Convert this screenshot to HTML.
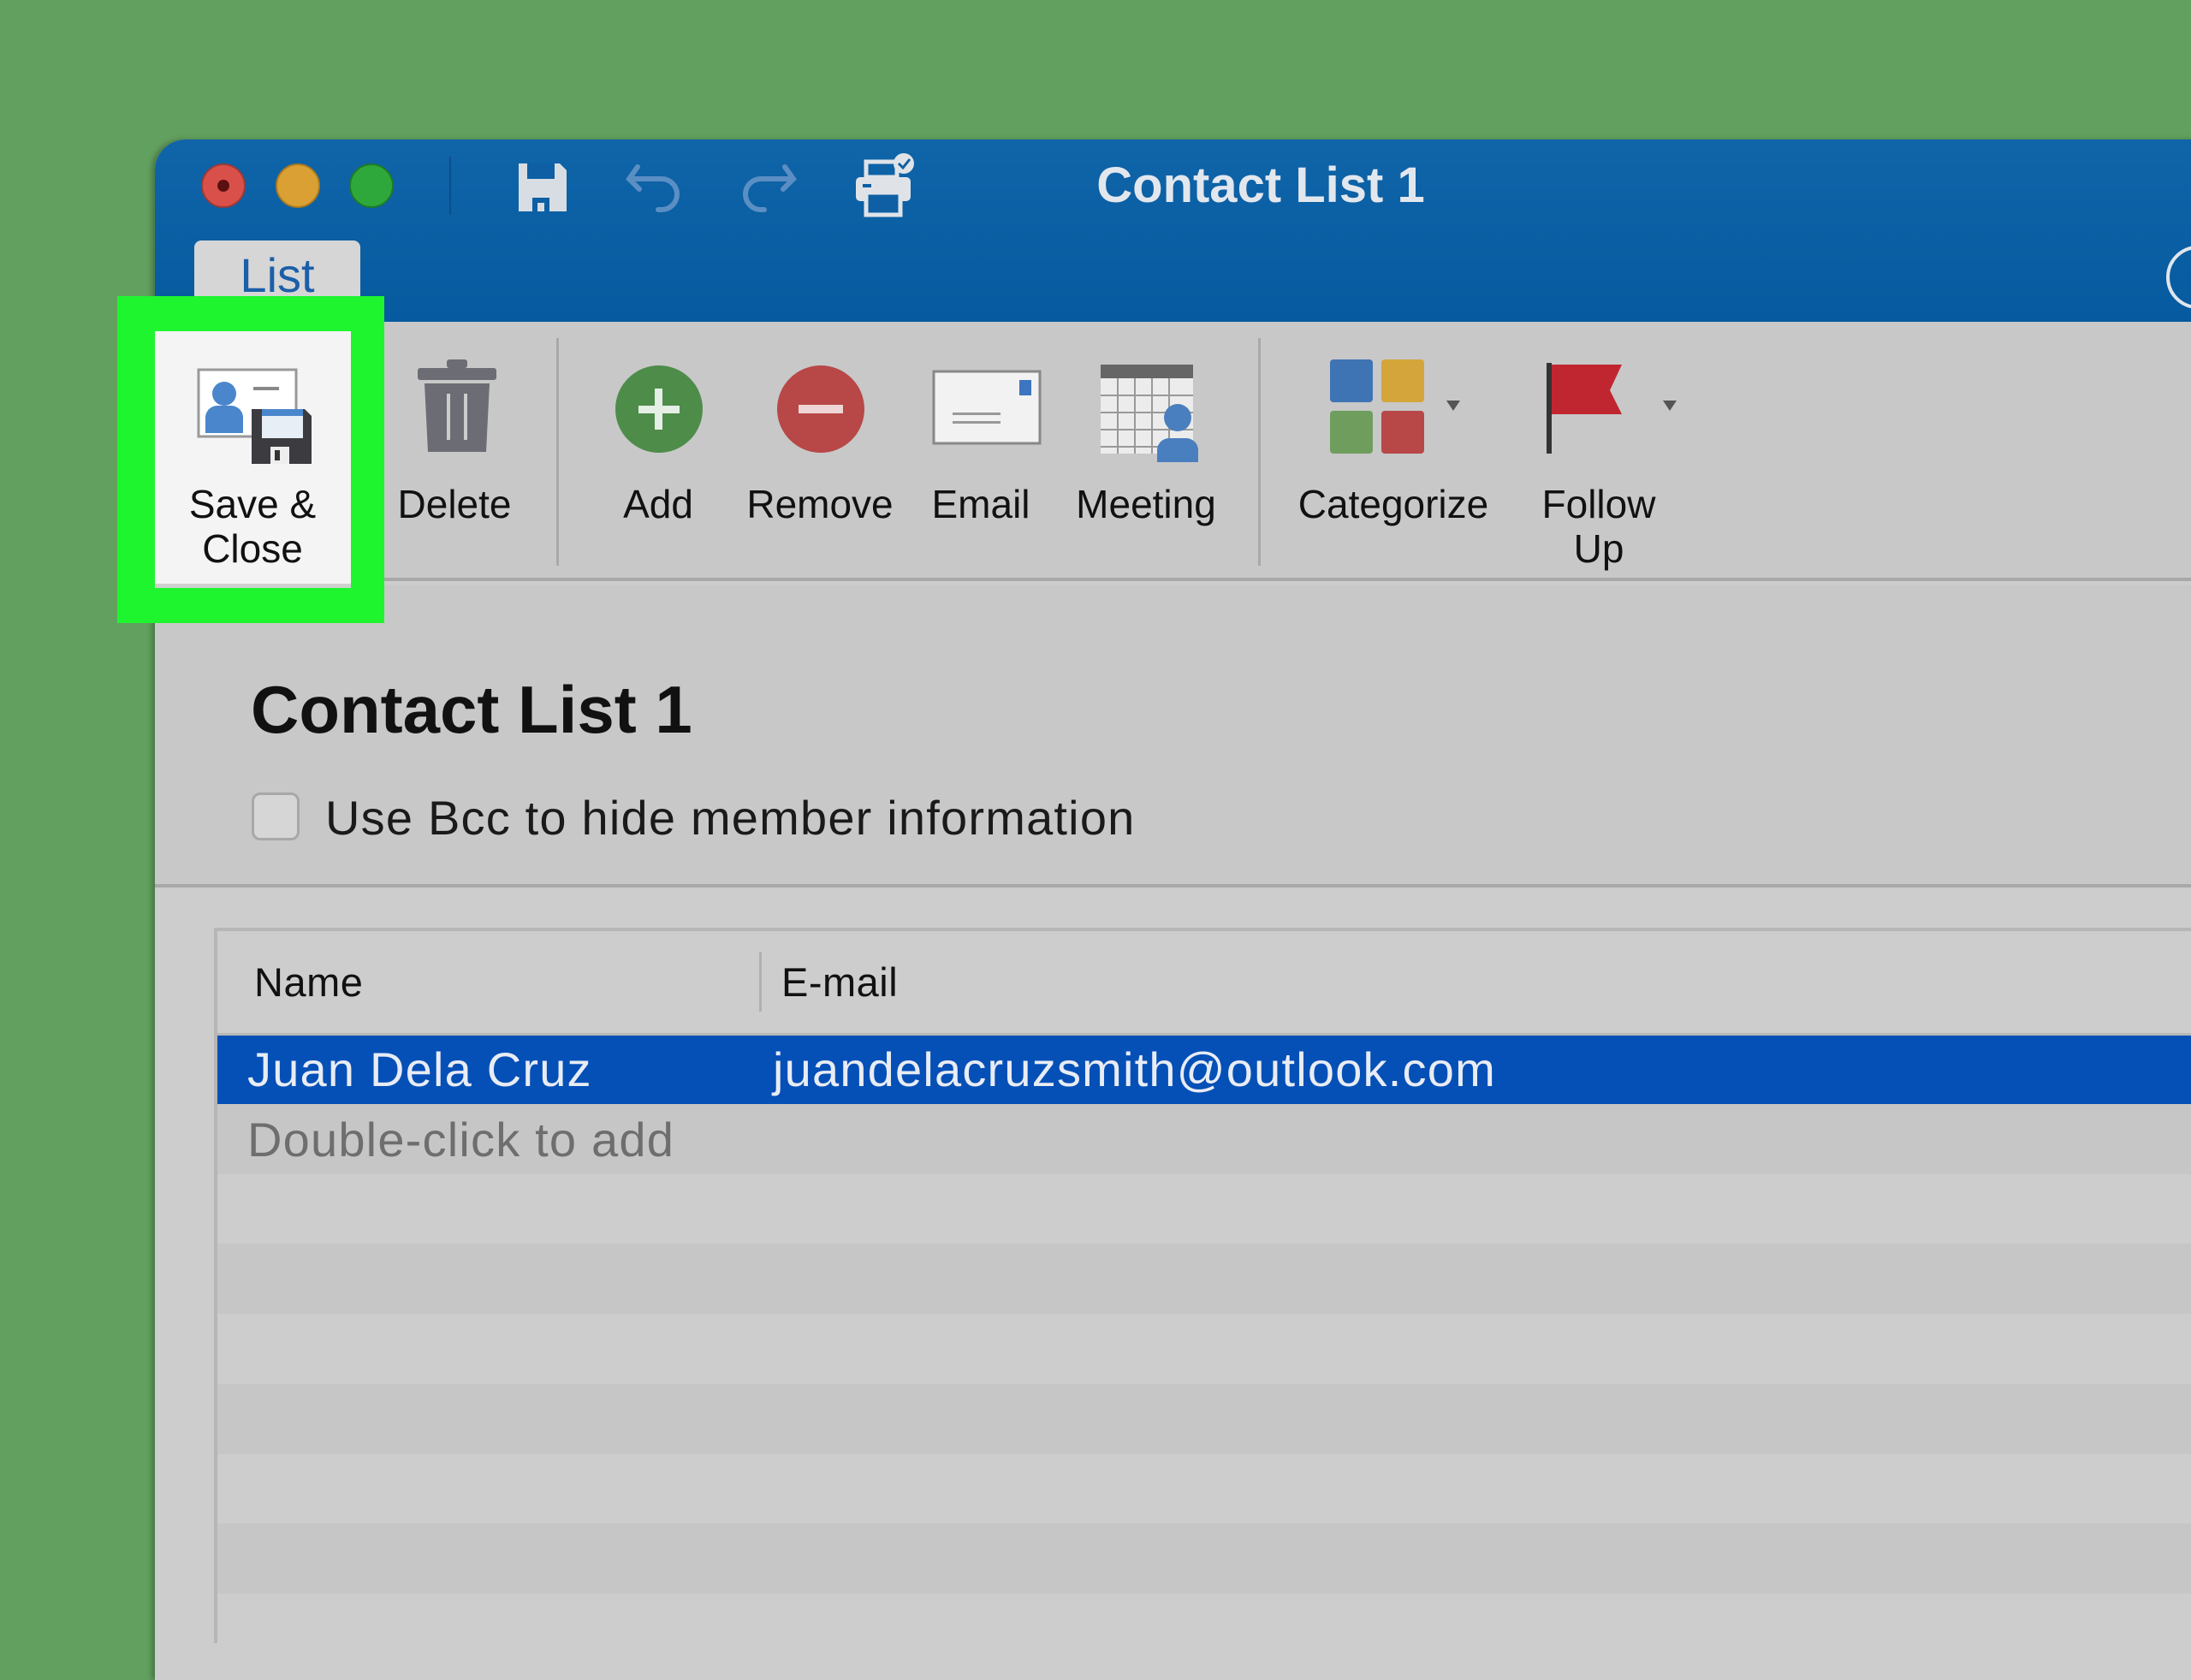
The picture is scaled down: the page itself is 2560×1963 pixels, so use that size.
<!DOCTYPE html>
<html><head><meta charset="utf-8"><style>
*{margin:0;padding:0;box-sizing:border-box}
body{width:2560px;height:1920px;overflow:hidden;background:#62a05f;font-family:"Liberation Sans",sans-serif;position:relative}
.a{position:absolute}
.lbl{position:absolute;font-size:46px;color:#111;text-align:center;line-height:52px;transform:translateX(-50%);white-space:nowrap}
.sep{position:absolute;width:3px;background:#a9a9a9;top:395px;height:266px}
</style></head><body>
<div class="a" style="left:181px;top:163px;width:2400px;height:1800px;border-radius:36px 0 0 0;overflow:hidden;background:#cdcdcd;box-shadow:-4px 0 6px rgba(0,0,0,.25)">
 <div class="a" style="left:0;top:0;width:2400px;height:213px;background:linear-gradient(#1064a8,#065a9f)"></div>
 <div class="a" style="left:54px;top:28px;width:52px;height:52px;border-radius:50%;background:#d9504b;border:2px solid #9c3a36"><div class="a" style="left:17px;top:17px;width:14px;height:14px;border-radius:50%;background:#5a1010"></div></div>
 <div class="a" style="left:141px;top:28px;width:52px;height:52px;border-radius:50%;background:#dba033;border:2px solid #a87a20"></div>
 <div class="a" style="left:227px;top:28px;width:52px;height:52px;border-radius:50%;background:#2ea83a;border:2px solid #1f7a29"></div>
 <div class="a" style="left:344px;top:20px;width:2px;height:68px;background:#0b4f8c"></div>
 <svg class="a" style="left:421px;top:24px" width="64" height="64" viewBox="0 0 64 64"><path d="M4 4h48l8 8v48H4z" fill="#d8dde3"/><rect x="14" y="4" width="32" height="18" fill="#0e5fa3"/><path d="M20 60V44h20v16h-6V50h-8v10z" fill="#0e5fa3"/></svg>
 <svg class="a" style="left:550px;top:24px" width="70" height="64" viewBox="0 0 70 64"><path d="M14 8L4 22l12 12" fill="none" stroke="#5b8fc4" stroke-width="6" stroke-linecap="round"/><path d="M6 22h36a18 18 0 0 1 0 36h-4" fill="none" stroke="#5b8fc4" stroke-width="6" stroke-linecap="round"/></svg>
 <svg class="a" style="left:680px;top:24px" width="70" height="64" viewBox="0 0 70 64"><path d="M56 8l10 14-12 12" fill="none" stroke="#5b8fc4" stroke-width="6" stroke-linecap="round"/><path d="M64 22H28a18 18 0 0 0 0 36h4" fill="none" stroke="#5b8fc4" stroke-width="6" stroke-linecap="round"/></svg>
 <svg class="a" style="left:815px;top:14px" width="76" height="80" viewBox="0 0 76 80"><rect x="16" y="12" width="36" height="18" fill="none" stroke="#dfe3e8" stroke-width="5"/><rect x="4" y="30" width="64" height="28" rx="5" fill="#dfe3e8"/><rect x="16" y="48" width="40" height="26" fill="#0e5fa3" stroke="#dfe3e8" stroke-width="5"/><rect x="12" y="38" width="10" height="4" fill="#0e5fa3"/><circle cx="60" cy="14" r="12" fill="#dfe3e8"/><path d="M54 14l5 5 8-10" fill="none" stroke="#0e5fa3" stroke-width="3"/></svg>
 <div class="a" style="left:1007px;top:22px;width:570px;text-align:center;font-size:58px;font-weight:bold;color:#e2e7ee;line-height:64px;white-space:nowrap">Contact List 1</div>
 <div class="a" style="left:46px;top:118px;width:194px;height:95px;background:#d6d6d6;border-radius:8px 8px 0 0;text-align:center;font-size:56px;color:#1b5fa9;line-height:82px">List</div>
 <div class="a" style="left:2350px;top:124px;width:74px;height:74px;border-radius:50%;border:4px solid #dfe6ee"></div>
 <div class="a" style="left:0;top:213px;width:2400px;height:303px;background:#c8c8c8;border-bottom:4px solid #a8a8a8"></div>
</div>
<!-- content -->
<div class="a" style="left:181px;top:683px;width:2379px;height:354px;background:#c8c8c8;border-bottom:4px solid #a8a8a8"></div>
<div class="a" style="left:293px;top:784px;font-size:78px;font-weight:bold;color:#111;line-height:90px">Contact List 1</div>
<div class="a" style="left:294px;top:926px;width:56px;height:56px;border-radius:10px;border:3px solid #a8a8a8;background:#d6d6d6"></div>
<div class="a" style="left:380px;top:924px;font-size:56px;letter-spacing:1.2px;color:#1a1a1a;line-height:64px">Use Bcc to hide member information</div>
<!-- green highlight -->
<div class="a" style="left:137px;top:346px;width:312px;height:382px;background:#1ef52f"></div>
<div class="a" style="left:181px;top:387px;width:229px;height:300px;background:#f4f4f4;border-bottom:5px solid #d0d0d0"></div>
<svg class="a" style="left:228px;top:430px" width="140" height="112" viewBox="0 0 140 112"><rect x="4" y="2" width="114" height="78" fill="#fff" stroke="#999" stroke-width="3"/><circle cx="34" cy="30" r="14" fill="#4a86cc"/><path d="M12 76v-18a14 14 0 0 1 14-14h16a14 14 0 0 1 14 14v18z" fill="#4a86cc"/><rect x="68" y="22" width="30" height="4" fill="#888"/><path d="M66 48h62l8 8v56H66z" fill="#3c3c40"/><rect x="78" y="48" width="48" height="34" fill="#e8eef5"/><rect x="78" y="48" width="48" height="8" fill="#4a86cc"/><rect x="88" y="92" width="22" height="20" fill="#eee"/><rect x="93" y="96" width="6" height="12" fill="#333"/></svg>
<div class="lbl" style="left:295px;top:563px">Save &amp;<br>Close</div>
<svg class="a" style="left:486px;top:418px" width="96" height="114" viewBox="0 0 96 114"><rect x="36" y="2" width="24" height="10" rx="3" fill="#6c6c74"/><rect x="2" y="12" width="92" height="14" rx="3" fill="#6c6c74"/><path d="M10 30h76l-4 80H14z" fill="#6c6c74"/><rect x="36" y="42" width="4" height="54" fill="#ccc"/><rect x="56" y="42" width="4" height="54" fill="#ccc"/></svg>
<div class="lbl" style="left:531px;top:563px">Delete</div>
<div class="sep" style="left:650px"></div>
<svg class="a" style="left:718px;top:424px" width="104" height="108" viewBox="0 0 104 108"><circle cx="52" cy="54" r="51" fill="#4e8c4a"/><rect x="28" y="50" width="48" height="9" fill="#e6efe6"/><rect x="47" y="30" width="9" height="48" fill="#e6efe6"/></svg>
<div class="lbl" style="left:769px;top:563px">Add</div>
<svg class="a" style="left:907px;top:424px" width="104" height="108" viewBox="0 0 104 108"><circle cx="52" cy="54" r="51" fill="#b84747"/><rect x="26" y="49" width="52" height="10" fill="#eed6d6"/></svg>
<div class="lbl" style="left:958px;top:563px">Remove</div>
<svg class="a" style="left:1089px;top:432px" width="128" height="90" viewBox="0 0 128 90"><rect x="2" y="2" width="124" height="84" fill="#f2f2f2" stroke="#888" stroke-width="3"/><rect x="102" y="12" width="14" height="18" fill="#3d75c0"/><rect x="24" y="50" width="56" height="3" fill="#999"/><rect x="24" y="60" width="56" height="3" fill="#999"/></svg>
<div class="lbl" style="left:1146px;top:563px">Email</div>
<svg class="a" style="left:1284px;top:424px" width="124" height="118" viewBox="0 0 124 118"><rect x="2" y="2" width="108" height="104" fill="#ececec"/><rect x="2" y="2" width="108" height="16" fill="#666"/><g stroke="#999" stroke-width="2"><path d="M2 38h108M2 58h108M2 78h108M2 98h108M22 18v88M42 18v88M62 18v88M82 18v88"/></g><circle cx="92" cy="64" r="16" fill="#4a7fbf"/><path d="M68 116v-14a14 14 0 0 1 14-14h20a14 14 0 0 1 14 14v14z" fill="#4a7fbf"/></svg>
<div class="lbl" style="left:1339px;top:563px">Meeting</div>
<div class="sep" style="left:1470px"></div>
<svg class="a" style="left:1552px;top:418px" width="160" height="116" viewBox="0 0 160 116"><rect x="2" y="2" width="50" height="50" rx="4" fill="#3f74b4"/><rect x="62" y="2" width="50" height="50" rx="4" fill="#d4a53a"/><rect x="2" y="62" width="50" height="50" rx="4" fill="#6f9d5e"/><rect x="62" y="62" width="50" height="50" rx="4" fill="#b84848"/><path d="M138 50h16l-8 12z" fill="#555"/></svg>
<div class="lbl" style="left:1628px;top:563px">Categorize</div>
<svg class="a" style="left:1805px;top:422px" width="160" height="110" viewBox="0 0 160 110"><rect x="2" y="2" width="6" height="106" fill="#333"/><path d="M8 4h82l-14 30 14 28H8z" fill="#c0262f"/><path d="M138 46h16l-8 12z" fill="#555"/></svg>
<div class="lbl" style="left:1868px;top:563px">Follow<br>Up</div>
<!-- table -->
<div class="a" style="left:250px;top:1084px;width:2310px;height:836px;background:#cdcdcd;border-left:4px solid #b6b6b6;border-top:4px solid #b6b6b6"></div>
<div class="a" style="left:297px;top:1120px;font-size:47px;letter-spacing:0.5px;color:#111;line-height:56px">Name</div>
<div class="a" style="left:887px;top:1112px;width:3px;height:70px;background:#b0b0b0"></div>
<div class="a" style="left:913px;top:1120px;font-size:47px;letter-spacing:0.5px;color:#111;line-height:56px">E-mail</div>
<div class="a" style="left:254px;top:1207px;width:2306px;height:3px;background:#b8b8b8"></div>
<div class="a" style="left:254px;top:1210px;width:2306px;height:80px;background:#0550b7"></div>
<div class="a" style="left:289px;top:1218px;font-size:56px;letter-spacing:1.2px;color:#e8ecf4;line-height:64px">Juan Dela Cruz</div>
<div class="a" style="left:903px;top:1218px;font-size:56px;letter-spacing:1.2px;color:#e8ecf4;line-height:64px">juandelacruzsmith@outlook.com</div>
<div class="a" style="left:254px;top:1290px;width:2306px;height:82px;background:#c6c6c6"></div>
<div class="a" style="left:289px;top:1300px;font-size:56px;letter-spacing:1.2px;color:#6e6e6e;line-height:64px">Double-click to add</div>
<div class="a" style="left:254px;top:1453px;width:2306px;height:82px;background:#c6c6c6"></div>
<div class="a" style="left:254px;top:1617px;width:2306px;height:82px;background:#c6c6c6"></div>
<div class="a" style="left:254px;top:1780px;width:2306px;height:82px;background:#c6c6c6"></div>
</body></html>
